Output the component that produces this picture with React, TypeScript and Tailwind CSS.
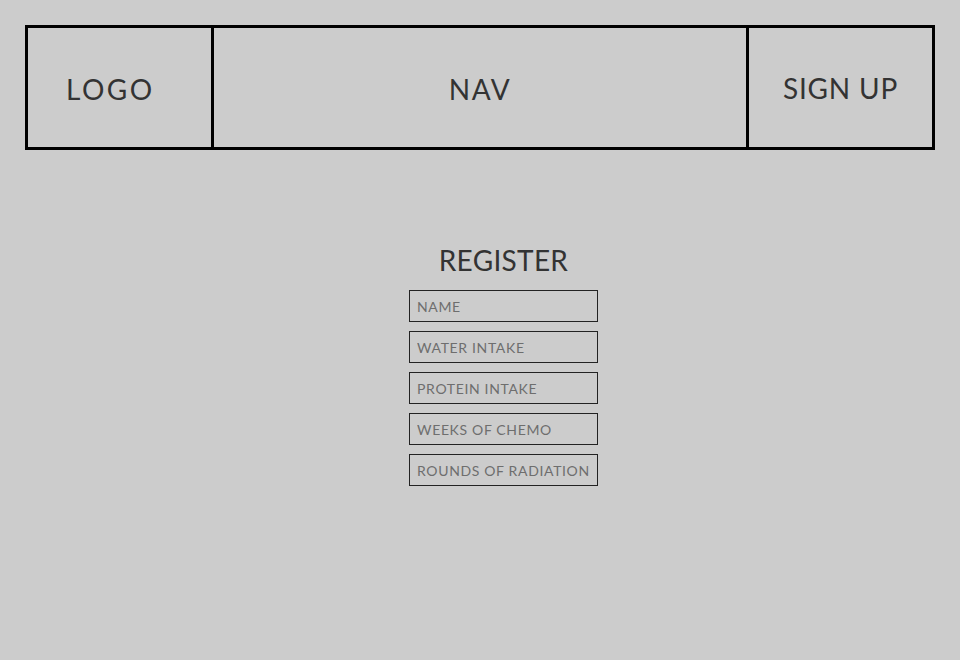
const FIELDS = ["NAME", "WATER INTAKE", "PROTEIN INTAKE", "WEEKS OF CHEMO", "ROUNDS OF RADIATION"];

export default function App() {
  return (
    <div
      className="w-[960px] h-[660px] bg-[#cccccc] text-[#333333] pt-[25px] px-[25px]"
      style={{ fontFamily: "Lato, 'Liberation Sans', sans-serif" }}
    >
      <header className="flex h-[125px] border-[3px] border-black">
        <div className="w-[186px] flex items-center pl-[38px] border-r-[3px] border-black text-[28px] tracking-[2.5px] pt-[2px]">
          LOGO
        </div>
        <div className="flex-1 flex items-center justify-center text-[28px] tracking-[1.5px] pt-[2px]">
          NAV
        </div>
        <div className="w-[186px] flex items-center justify-center border-l-[3px] border-black text-[28px] tracking-[0.8px]">
          SIGN UP
        </div>
      </header>

      <main className="flex flex-col items-center pl-[47px] pt-[93px]">
        <h1 className="text-[28px] leading-[34px] tracking-[0.3px] mb-[13px]">REGISTER</h1>
        <div className="flex flex-col gap-[9px]">
          {FIELDS.map((f) => (
            <input
              key={f}
              placeholder={f}
              className="w-[189px] h-[32px] border border-[#222222] bg-transparent px-[7px] text-[14px] tracking-[0.65px] placeholder:text-[#6e6e6e] outline-none"
            />
          ))}
        </div>
      </main>
    </div>
  );
}
